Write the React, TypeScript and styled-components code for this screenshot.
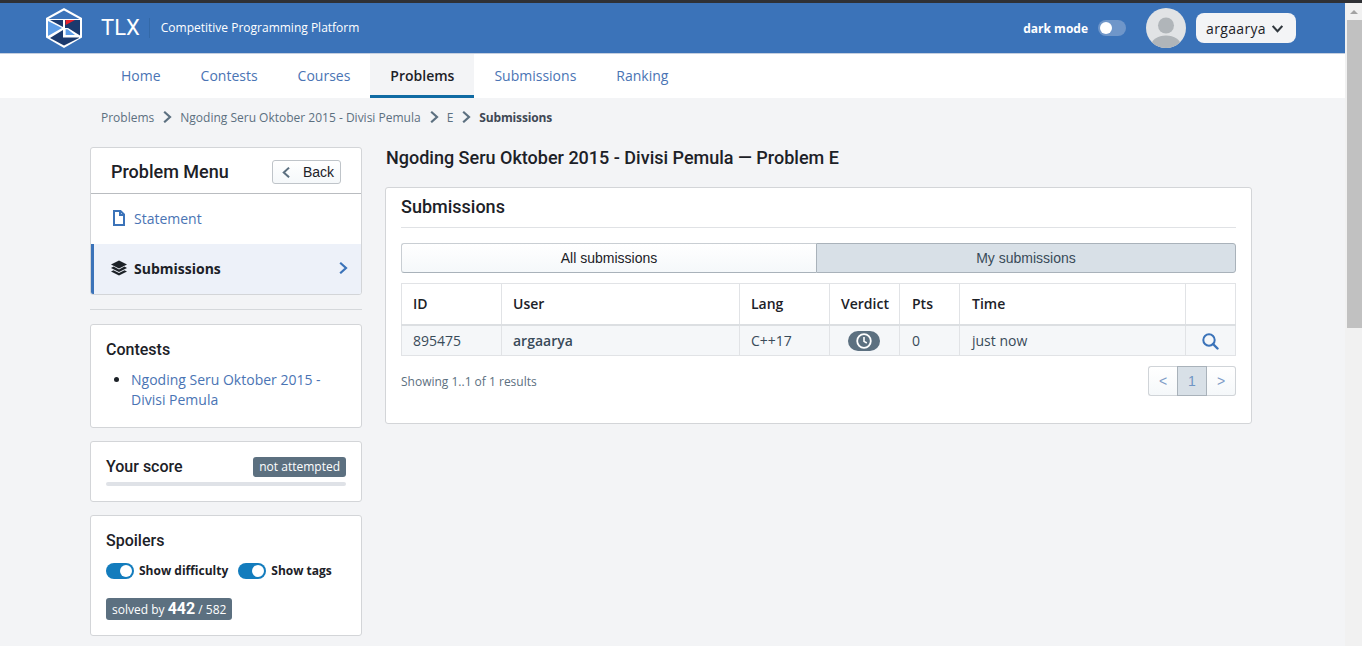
import React from "react";
import styled, { createGlobalStyle } from "styled-components";

const Global = createGlobalStyle`
  html, body { margin: 0; padding: 0; height: 646px; overflow: hidden; background: #f3f4f6; }
  body { font-family: "Open Sans", sans-serif; font-size: 14px; color: #1c2127; }
  * { box-sizing: border-box; }
`;

const Shell = styled.div`display: flex; height: 646px; overflow: hidden; border-top: 3px solid #2f3136;`;
const Page = styled.div`flex: 1; min-width: 0; display: flex; flex-direction: column;`;
const Scrollbar = styled.div`width: 17px; flex: none; background: #f1f1f1; display: flex; flex-direction: column;`;
const ScrollArrow = styled.div`
  height: 17px; padding: 7px 0 0 1px; display: flex; justify-content: center;
  &::before { content: ""; height: 0; border-left: 4px solid transparent; border-right: 4px solid transparent; border-bottom: 4px solid #a3a3a3; }
`;
const ScrollThumb = styled.div`width: 15px; margin-left: 2px; height: 308px; background: #c1c1c1;`;

const Header = styled.header`
  height: 51px; background: #3b73b9; border-bottom: 1px solid #c5cfdf; display: flex; align-items: center;
  padding: 0 49px 0 46px; color: #fff;
`;
const Brand = styled.div`display: flex; align-items: center;`;
const Tlx = styled.span`font-family: "Roboto", sans-serif; font-size: 22px; line-height: 20px; font-weight: 400; margin-left: 19px; padding-right: 9px; border-right: 1px solid #3369a8;`;
const Tagline = styled.span`font-size: 12px; margin-left: 11px; line-height: 20px;`;
const HeaderRight = styled.div`margin-left: auto; display: flex; align-items: center;`;
const DarkLabel = styled.span`font-size: 12px; font-weight: 700; margin-right: 10px;`;
const DarkTrack = styled.div`width: 28px; height: 16px; border-radius: 8px; background: #6f96c9; padding: 2px; margin-right: 20px;`;
const DarkKnob = styled.div`width: 12px; height: 12px; border-radius: 50%; background: #fff;`;
const Avatar = styled.svg`width: 40px; height: 40px; border-radius: 50%; margin-right: 10px; display: block;`;
const UserButton = styled.div`
  width: 100px; height: 30px; border-radius: 8px; background: #f3f4f6; color: #1c2127; font-size: 14px; letter-spacing: 0.35px;
  display: flex; align-items: center; padding-left: 10px; gap: 6px;
`;

const Nav = styled.nav`height: 44px; background: #fff; display: flex; padding-left: 101px;`;
const NavItem = styled.div<{ $active?: boolean }>`
  padding: 0 20px; height: 44px; line-height: 44px; font-size: 14px;
  color: ${(p) => (p.$active ? "#1c2127" : "#4a74b4")};
  font-weight: ${(p) => (p.$active ? 600 : 400)};
  background: ${(p) => (p.$active ? "#f3f4f6" : "transparent")};
  border-bottom: 3px solid ${(p) => (p.$active ? "#106ba3" : "transparent")};
`;

const Crumbs = styled.div`display: flex; align-items: center; height: 38px; padding: 0 0 0 101px; font-size: 12px; color: #5c7080; gap: 7px;`;
const CrumbCurrent = styled.span`font-weight: 700; color: #404854; letter-spacing: -0.15px;`;

const Body = styled.div`display: flex; padding: 11px 0 0 90px; gap: 23px; align-items: flex-start;`;
const Side = styled.aside`width: 272px; flex: none; display: flex; flex-direction: column;`;
const Main = styled.main`width: 867px; flex: none;`;

const Card = styled.section`
  background: #fff; border: 1px solid #d3d5d8; border-radius: 3px;
`;
const MenuCard = styled(Card)`overflow: hidden;`;
const MenuHead = styled.div`
  height: 46px; border-bottom: 1px solid #b9bcc0; display: flex; align-items: center; justify-content: space-between; padding: 3px 20px 0;
`;
const MenuTitle = styled.h3`margin: 0; font-family: "Roboto", sans-serif; font-weight: 500; font-size: 18px; line-height: 24px; color: #1c2127;`;
const BackButton = styled.div`
  width: 69px; height: 24px; border: 1px solid #bfc4c9; border-radius: 3px; background: linear-gradient(#fff, #f5f8fa);
  display: flex; align-items: center; font-family: "Liberation Sans", sans-serif; font-size: 14px; padding-left: 8px; gap: 11px; color: #1c2127;
`;
const MenuItem = styled.div<{ $active?: boolean }>`
  height: 50px; display: flex; align-items: center; padding: 0 12px 2px ${(p) => (p.$active ? "17px" : "20px")}; gap: 7px;
  font-size: 14px; color: ${(p) => (p.$active ? "#1c2127" : "#4a74b4")}; font-weight: ${(p) => (p.$active ? 700 : 400)};
  background: ${(p) => (p.$active ? "#edf1f9" : "#fff")};
  border-left: ${(p) => (p.$active ? "3px solid #3b73b9" : "0")};
`;
const MenuChevron = styled.span`margin: 0 0 1px auto; display: block;`;
const Divider = styled.hr`width: 100%; border: 0; border-top: 1px solid #d5d8db; margin: 14px 0 14px;`;

const SideCard = styled(Card)<{ $h: number; $mb?: number }>`
  height: ${(p) => p.$h}px; margin-bottom: ${(p) => p.$mb ?? 0}px; padding: 15px;
`;
const SideTitle = styled.h4`margin: 0; font-family: "Roboto", sans-serif; font-weight: 500; font-size: 16px; line-height: 20px; color: #1c2127;`;
const ContestList = styled.ul`margin: 10px 0 0; padding-left: 25px; line-height: 20px; color: #1c2127;`;
const ContestLink = styled.a`color: #4a74b4; font-size: 14px;`;
const ScoreRow = styled.div`display: flex; align-items: center; justify-content: space-between;`;
const Tag = styled.span`
  background: #5c7080; color: #fff; font-size: 12px; border-radius: 3px; line-height: 16px; padding: 2px 6px; display: inline-block;
`;
const ScoreBar = styled.div`height: 4px; border-radius: 2px; background: #dfe2e7; margin-top: 5px;`;
const ToggleRow = styled.div`display: flex; align-items: center; margin-top: 11px; font-size: 12px; font-weight: 700; color: #1c2127;`;
const Toggle = styled.div`width: 28px; height: 16px; border-radius: 8px; background: #137cbd; padding: 2px 2px 2px 14px; margin-right: 5px;`;
const ToggleKnob = styled.div`width: 12px; height: 12px; border-radius: 50%; background: #fff;`;
const ToggleLabel = styled.span`margin-right: 10px;`;
const SolvedTag = styled(Tag)`margin-top: 19px; height: 22px; padding: 0 6px; line-height: 22px; font-size: 12px; white-space: nowrap;`;
const SolvedNum = styled.b`font-family: "Roboto", sans-serif; font-size: 16px; font-weight: 700;`;

const PageTitle = styled.h2`margin: -1px 0 17px; font-family: "Roboto", sans-serif; font-weight: 500; font-size: 18px; line-height: 24px; color: #1c2127; padding-left: 1px;`;
const MainCard = styled(Card)`height: 237px; padding: 6px 15px 0;`;
const MainHead = styled.div`height: 34px; border-bottom: 1px solid #e0e2e5; font-family: "Roboto", sans-serif; font-weight: 500; font-size: 18px; line-height: 26px; color: #1c2127;`;
const Tabs = styled.div`display: flex; margin-top: 15px; height: 30px;`;
const Tab = styled.div<{ $active?: boolean }>`
  flex: ${(p) => (p.$active ? "1" : "0 0 415px")}; display: flex; align-items: center; justify-content: center;
  font-family: "Liberation Sans", sans-serif; font-size: 14px; color: ${(p) => (p.$active ? "#394b59" : "#1c2127")};
  background: ${(p) => (p.$active ? "#d8e0e7" : "linear-gradient(#fff, #f5f8fa)")};
  border: 1px solid ${(p) => (p.$active ? "#a9b2ba" : "#c9ced3")};
  border-bottom-color: #a9b2ba;
  border-radius: ${(p) => (p.$active ? "0 3px 3px 0" : "3px 0 0 3px")};
  ${(p) => (p.$active ? "" : "border-right: 0;")}
`;
const Table = styled.table`width: 100%; margin-top: 10px; border-collapse: collapse; table-layout: fixed; font-size: 14px;`;
const Th = styled.th<{ $w: number; $pl?: number }>`
  width: ${(p) => p.$w}px; height: 41px; padding: 0 11px 0 ${(p) => p.$pl ?? 11}px; text-align: left; font-weight: 600; color: #1c2127; font-size: 14px;
  border: 1px solid #e1e3e6; border-bottom: 2px solid #dcdfe2;
`;
const Td = styled.td<{ $center?: boolean; $bold?: boolean; $pl?: number }>`
  height: 31px; padding: 0 11px 0 ${(p) => p.$pl ?? 11}px; background: #f5f7f9; border: 1px solid #e1e3e6; color: #394b59;
  text-align: ${(p) => (p.$center ? "center" : "left")}; font-weight: ${(p) => (p.$bold ? 600 : 400)};
`;
const VerdictPill = styled.span`display: inline-flex; width: 32px; height: 20px; margin-right: 2px; border-radius: 10px; background: #5c7080; align-items: center; justify-content: center; vertical-align: middle;`;
const IconBox = styled.span`display: inline-flex; vertical-align: middle;`;
const Footer = styled.div`display: flex; align-items: center; justify-content: space-between; margin-top: 10px;`;
const Showing = styled.span`font-size: 12px; color: #5c7080;`;
const Pager = styled.div`display: flex; height: 30px;`;
const PageBtn = styled.div<{ $active?: boolean; $pos: "l" | "m" | "r" }>`
  width: ${(p) => (p.$pos === "m" ? 30 : 29)}px; display: flex; align-items: center; justify-content: center;
  font-family: "Liberation Sans", sans-serif; font-size: 14px; color: ${(p) => (p.$active ? "#6f95c4" : "#7f9cc7")};
  background: ${(p) => (p.$active ? "#d8e0e7" : "linear-gradient(#fff, #f5f8fa)")};
  border: 1px solid ${(p) => (p.$active ? "#a9b2ba" : "#d0d4d8")};
  border-radius: ${(p) => (p.$pos === "l" ? "3px 0 0 3px" : p.$pos === "r" ? "0 3px 3px 0" : "0")};
  ${(p) => (p.$pos === "l" ? "border-right: 0;" : p.$pos === "r" ? "border-left: 0;" : "")}
`;

const Logo = () => (
  <svg width="36" height="40" viewBox="0 0 36 40" style={{ display: "block" }}>
    <path d="M18 0 L36 10 V29.5 L18 40 L0 29.5 V10 Z" fill="#fff" />
    <path d="M18 2.5 L33.5 11 H2.5 Z" fill="#3b73b9" />
    <path d="M2 13 L16 20 L2 28 Z" fill="#5c9ce6" />
    <path d="M4 12 H17 V19 Z" fill="#1b3a6e" />
    <path d="M19 12 H34 V27.5 L22 20 H19 Z" fill="#1b3a6e" />
    <path d="M19.6 12 H29 L19.6 17 Z" fill="#e8202a" />
    <path d="M19.6 21.3 H21.5 L29 27 H19.6 Z" fill="#5c9ce6" />
    <path d="M4 30 L17 22 V29.5 H33 V30 L18 37.5 Z" fill="#1b3a6e" />
  </svg>
);

const Chevron = ({ color = "#5c7080", size = 12, dir = "right" }: { color?: string; size?: number; dir?: "right" | "left" | "down" }) => {
  const d = dir === "right" ? "M4 1.5 L9 6 L4 10.5" : dir === "left" ? "M8 1.5 L3 6 L8 10.5" : "M1.5 4 L6 9 L10.5 4";
  return (
    <svg width={size} height={size} viewBox="0 0 12 12" fill="none" style={{ display: "block" }}>
      <path d={d} stroke={color} strokeWidth="2.2" strokeLinecap="square" />
    </svg>
  );
};

const DocIcon = () => (
  <svg width="16" height="16" viewBox="0 0 16 16" style={{ display: "block" }}>
    <path d="M3 1 H9.5 L13 4.5 V15 H3 Z M9 1 V5 H13" fill="none" stroke="#3b73b9" strokeWidth="2" />
  </svg>
);
const LayersIcon = () => (
  <svg width="16" height="16" viewBox="0 0 16 16" style={{ display: "block" }}>
    <path d="M8 0.5 L16 4.5 L8 8.5 L0 4.5 Z" fill="#1c2127" />
    <path d="M2.5 6.6 L8 9.4 L13.5 6.6 L16 8 L8 12 L0 8 Z" fill="#1c2127" />
    <path d="M2.5 10.2 L8 13 L13.5 10.2 L16 11.5 L8 15.5 L0 11.5 Z" fill="#1c2127" />
  </svg>
);
const ClockIcon = () => (
  <svg width="16" height="16" viewBox="0 0 16 16" fill="none" style={{ display: "block" }}>
    <circle cx="8" cy="8" r="6.8" stroke="#fff" strokeWidth="1.8" />
    <path d="M8 4 V8.4 L10.8 10" stroke="#fff" strokeWidth="1.6" />
  </svg>
);
const SearchIcon = () => (
  <svg width="17" height="17" viewBox="0 0 17 17" fill="none" style={{ display: "block" }}>
    <circle cx="7" cy="7" r="5.7" stroke="#3b73b9" strokeWidth="2" />
    <path d="M11 11 L15.5 15.5" stroke="#3b73b9" strokeWidth="2.4" strokeLinecap="round" />
  </svg>
);

export default function App() {
  return (
    <Shell>
      <Global />
      <Page>
        <Header>
          <Brand>
            <Logo />
            <Tlx>TLX</Tlx>
            <Tagline>Competitive Programming Platform</Tagline>
          </Brand>
          <HeaderRight>
            <DarkLabel>dark mode</DarkLabel>
            <DarkTrack><DarkKnob /></DarkTrack>
            <Avatar viewBox="0 0 40 40">
              <rect width="40" height="40" fill="#e1e3e5" />
              <circle cx="20" cy="17.5" r="8" fill="#b0b5b9" />
              <ellipse cx="20" cy="38" rx="15" ry="10.5" fill="#b0b5b9" />
            </Avatar>
            <UserButton>argaarya <Chevron color="#30373d" size={11} dir="down" /></UserButton>
          </HeaderRight>
        </Header>
        <Nav>
          <NavItem>Home</NavItem>
          <NavItem>Contests</NavItem>
          <NavItem>Courses</NavItem>
          <NavItem $active>Problems</NavItem>
          <NavItem>Submissions</NavItem>
          <NavItem>Ranking</NavItem>
        </Nav>
        <Crumbs>
          <span>Problems</span>
          <Chevron />
          <span>Ngoding Seru Oktober 2015 - Divisi Pemula</span>
          <Chevron />
          <span>E</span>
          <Chevron />
          <CrumbCurrent>Submissions</CrumbCurrent>
        </Crumbs>
        <Body>
          <Side>
            <MenuCard>
              <MenuHead>
                <MenuTitle>Problem Menu</MenuTitle>
                <BackButton><Chevron dir="left" size={11} />Back</BackButton>
              </MenuHead>
              <MenuItem><DocIcon />Statement</MenuItem>
              <MenuItem $active>
                <LayersIcon />Submissions
                <MenuChevron><Chevron color="#3b73b9" size={12} /></MenuChevron>
              </MenuItem>
            </MenuCard>
            <Divider />
            <SideCard $h={104} $mb={13}>
              <SideTitle>Contests</SideTitle>
              <ContestList>
                <li><ContestLink>Ngoding Seru Oktober 2015 - Divisi Pemula</ContestLink></li>
              </ContestList>
            </SideCard>
            <SideCard $h={61} $mb={13}>
              <ScoreRow>
                <SideTitle>Your score</SideTitle>
                <Tag>not attempted</Tag>
              </ScoreRow>
              <ScoreBar />
            </SideCard>
            <SideCard $h={121}>
              <SideTitle>Spoilers</SideTitle>
              <ToggleRow>
                <Toggle><ToggleKnob /></Toggle>
                <ToggleLabel>Show difficulty</ToggleLabel>
                <Toggle><ToggleKnob /></Toggle>
                <ToggleLabel>Show tags</ToggleLabel>
              </ToggleRow>
              <SolvedTag>solved by <SolvedNum>442</SolvedNum> / 582</SolvedTag>
            </SideCard>
          </Side>
          <Main>
            <PageTitle>Ngoding Seru Oktober 2015 - Divisi Pemula — Problem E</PageTitle>
            <MainCard>
              <MainHead>Submissions</MainHead>
              <Tabs>
                <Tab>All submissions</Tab>
                <Tab $active>My submissions</Tab>
              </Tabs>
              <Table>
                <thead>
                  <tr>
                    <Th $w={100}>ID</Th>
                    <Th $w={238}>User</Th>
                    <Th $w={90}>Lang</Th>
                    <Th $w={70}>Verdict</Th>
                    <Th $w={60} $pl={12}>Pts</Th>
                    <Th $w={226} $pl={12}>Time</Th>
                    <Th $w={50} />
                  </tr>
                </thead>
                <tbody>
                  <tr>
                    <Td>895475</Td>
                    <Td $bold>argaarya</Td>
                    <Td>C++17</Td>
                    <Td $center><VerdictPill><ClockIcon /></VerdictPill></Td>
                    <Td $pl={12}>0</Td>
                    <Td $pl={12}>just now</Td>
                    <Td $center><IconBox><SearchIcon /></IconBox></Td>
                  </tr>
                </tbody>
              </Table>
              <Footer>
                <Showing>Showing 1..1 of 1 results</Showing>
                <Pager>
                  <PageBtn $pos="l">&lt;</PageBtn>
                  <PageBtn $pos="m" $active>1</PageBtn>
                  <PageBtn $pos="r">&gt;</PageBtn>
                </Pager>
              </Footer>
            </MainCard>
          </Main>
        </Body>
      </Page>
      <Scrollbar>
        <ScrollArrow />
        <ScrollThumb />
      </Scrollbar>
    </Shell>
  );
}
